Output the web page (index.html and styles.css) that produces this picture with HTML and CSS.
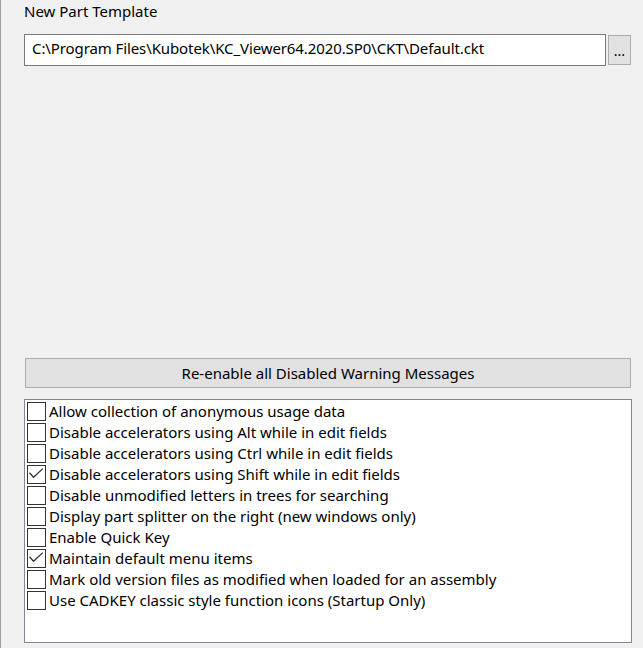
FILE: index.html
```html
<!DOCTYPE html>
<html lang="en">
<head>
    <meta charset="UTF-8">
    <title>Options</title>
    <link rel="stylesheet" href="styles.css">
</head>
<body>
    <div class="panel">
        <div class="field-label">New Part Template</div>
        <div class="path-row">
            <div class="path-box">C:\Program Files\Kubotek\KC_Viewer64.2020.SP0\CKT\Default.ckt</div>
            <button class="browse-button">...</button>
        </div>

        <div class="spacer"></div>

        <button class="wide-button">Re-enable all Disabled Warning Messages</button>

        <div class="check-list">
            <div class="check-row"><span class="check-box"></span><span>Allow collection of anonymous usage data</span></div>
            <div class="check-row"><span class="check-box"></span><span>Disable accelerators using Alt while in edit fields</span></div>
            <div class="check-row"><span class="check-box"></span><span>Disable accelerators using Ctrl while in edit fields</span></div>
            <div class="check-row"><span class="check-box checked"><svg viewBox="0 0 17 17"><polyline points="1.5,6.8 5.5,11.3 14.8,2.6"/></svg></span><span>Disable accelerators using Shift while in edit fields</span></div>
            <div class="check-row"><span class="check-box"></span><span>Disable unmodified letters in trees for searching</span></div>
            <div class="check-row"><span class="check-box"></span><span>Display part splitter on the right (new windows only)</span></div>
            <div class="check-row"><span class="check-box"></span><span>Enable Quick Key</span></div>
            <div class="check-row"><span class="check-box checked"><svg viewBox="0 0 17 17"><polyline points="1.5,6.8 5.5,11.3 14.8,2.6"/></svg></span><span>Maintain default menu items</span></div>
            <div class="check-row"><span class="check-box"></span><span>Mark old version files as modified when loaded for an assembly</span></div>
            <div class="check-row"><span class="check-box"></span><span>Use CADKEY classic style function icons (Startup Only)</span></div>
        </div>
    </div>
</body>
</html>
```

FILE: styles.css
```css
html, body {
    height: 100%;
}

body {
    margin: 0;
    background-color: #f0f0f0;
    border-left: 1px solid #a0a0a0;
    box-sizing: border-box;
    font-family: "Noto Sans", "Open Sans", sans-serif;
    font-size: 15px;
    color: #000;
}

.panel {
    height: 100%;
    box-sizing: border-box;
    padding: 0 11px 5px 23px;
    display: flex;
    flex-direction: column;
}

.field-label {
    line-height: 20px;
    padding-top: 1px;
    margin-bottom: 2px;
}

.path-row {
    display: flex;
    gap: 2px;
    margin-top: 11px;
    margin-right: 1px;
    height: 32px;
}

.path-box {
    flex: 1;
    background-color: #fff;
    border: 1px solid #7a7a7a;
    padding: 1px 7px 0 7px;
    line-height: 24px;
    letter-spacing: -0.1px;
    white-space: nowrap;
}

.browse-button {
    width: 23px;
    height: 30px;
    margin-top: 1px;
    padding: 0;
    border: 1px solid #adadad;
    background-color: #e1e1e1;
    font-family: inherit;
    font-size: 14px;
    color: #000;
}

.spacer {
    flex: 1;
}

.wide-button {
    height: 30px;
    margin: 0 1px 11px 1px;
    border: 1px solid #adadad;
    background-color: #e1e1e1;
    font-family: inherit;
    font-size: 15px;
    color: #000;
}

.check-list {
    height: 244px;
    box-sizing: border-box;
    background-color: #fff;
    border: 1px solid #828790;
    padding: 2px;
}

.check-row {
    display: flex;
    gap: 3px;
    height: 21px;
    line-height: 19px;
    white-space: nowrap;
}

.check-box {
    width: 19px;
    height: 19px;
    box-sizing: border-box;
    border: 1px solid #333;
    background-color: #fff;
    flex-shrink: 0;
}

.check-box svg {
    display: block;
    width: 17px;
    height: 17px;
}

.check-box polyline {
    fill: none;
    stroke: #333;
    stroke-width: 1.3;
}
```
